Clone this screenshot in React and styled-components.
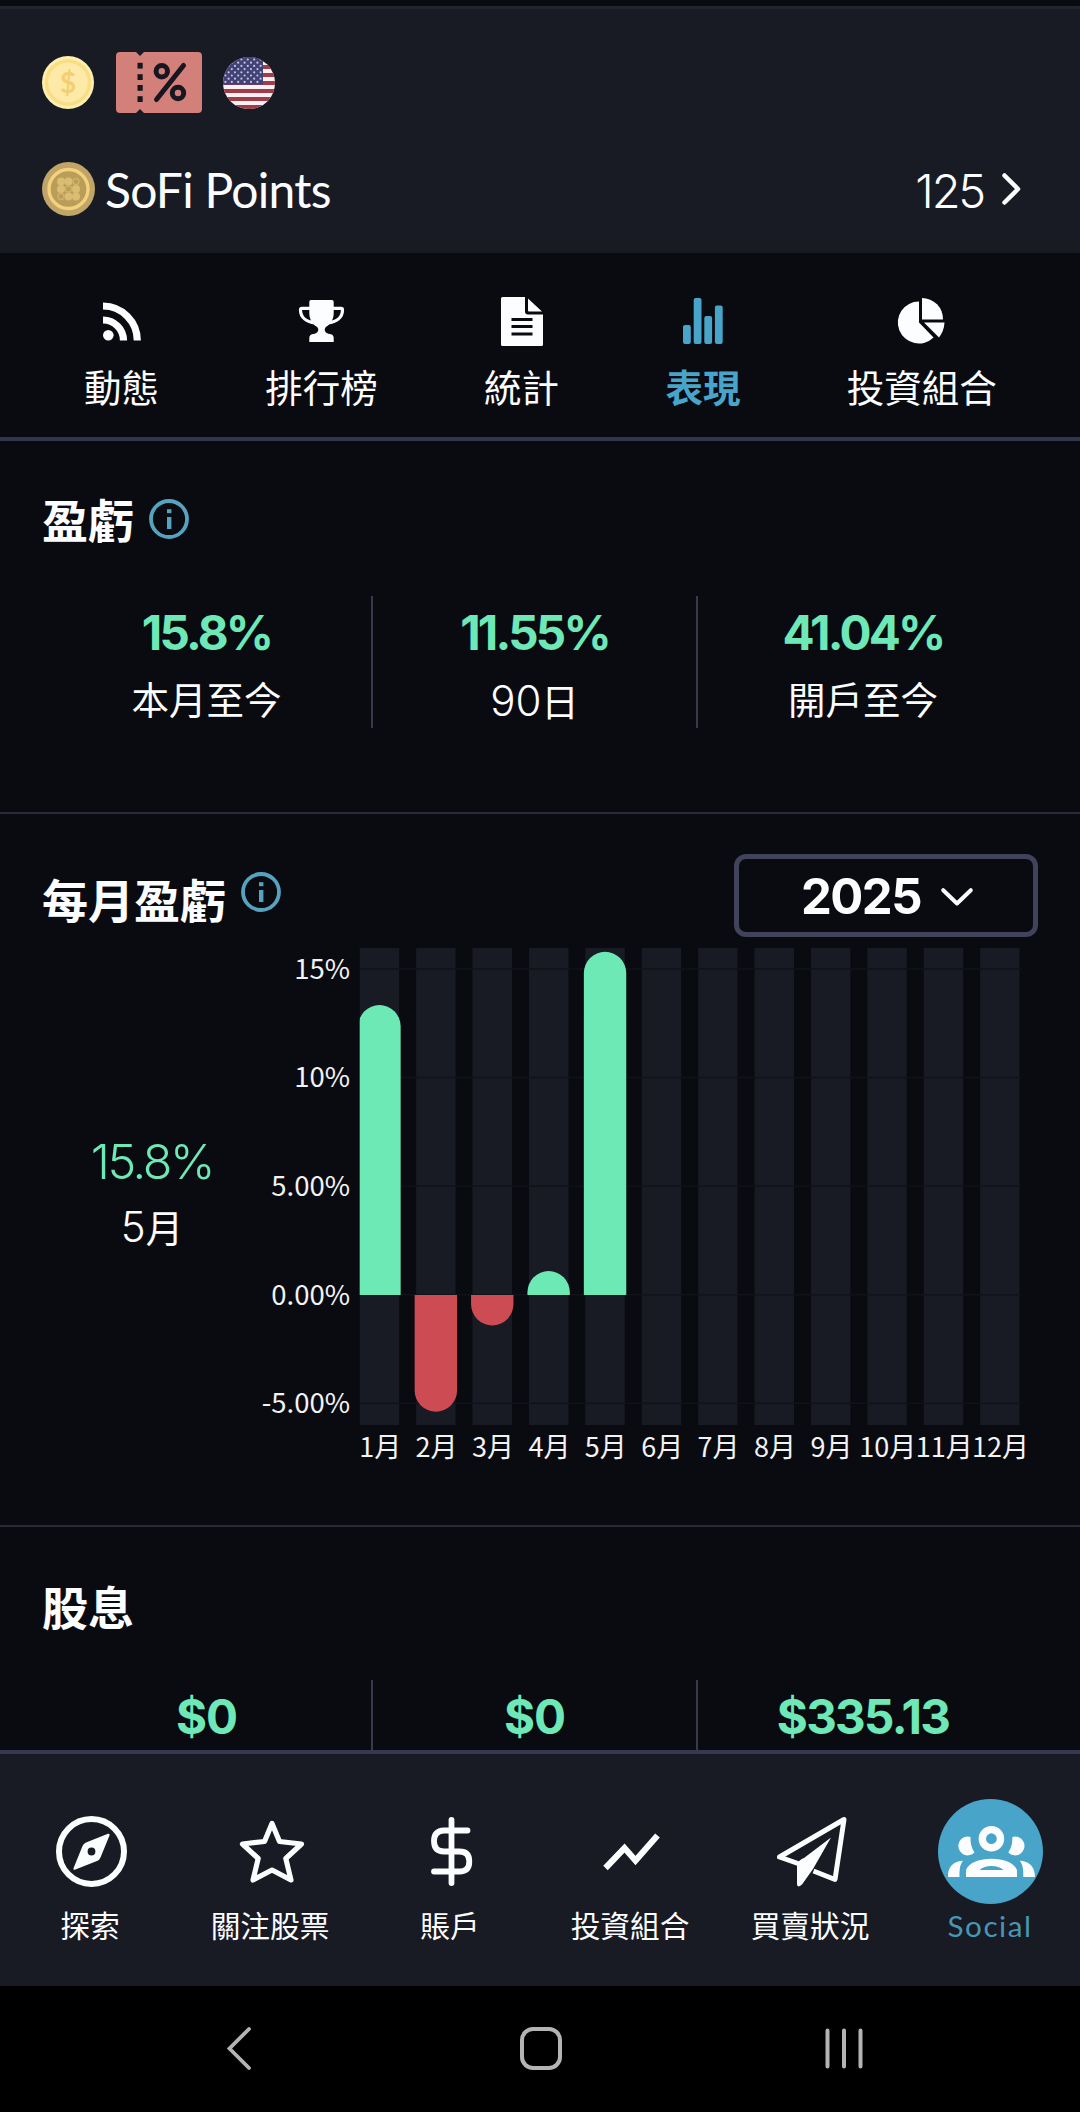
import React, { useState } from "react";
import styled, { createGlobalStyle } from "styled-components";

const GlobalStyle = createGlobalStyle`
  * {
    box-sizing: border-box;
  }
  body {
    margin: 0;
    background: #0a0b11;
    color: #fcfdff;
    font-family: Inter, "Noto Sans CJK TC", sans-serif;
  }
  svg {
    display: block;
    flex: none;
    overflow: visible;
  }
`;

const Screen = styled.div`
  display: flex;
  flex-direction: column;
  width: 1080px;
  height: 2112px;
  overflow: hidden;
`;

const Header = styled.header`
  flex: none;
  height: 247px;
  margin-top: 6px;
  padding: 43px 59px 0 42px;
  border-top: 3px solid #23242e;
  background: #181a24;
`;

const Badges = styled.div`
  display: flex;
  align-items: center;
  height: 61px;
`;

const TicketWrap = styled.div`
  margin: 0 21px 0 22px;
`;

const PointsRow = styled.div`
  display: flex;
  align-items: center;
  height: 54px;
  margin-top: 49px;
`;

const PointsName = styled.span`
  flex: 1;
  margin: 2px 0 0 10px;
  font: 400 48px/56px Lato, sans-serif;
  letter-spacing: -0.75px;
`;

const PointsValue = styled.span`
  margin: 4px 18px 0 0;
  font-size: 47px;
  font-weight: 350;
  line-height: 54px;
  letter-spacing: -2.2px;
`;

const Tabs = styled.nav`
  display: flex;
  flex: none;
  gap: 106.3px;
  height: 188px;
  padding: 42px 0 0 84px;
  border-bottom: 4px solid #33364a;
`;

const Tab = styled.div`
  display: flex;
  flex-direction: column;
  align-items: center;
  color: ${({ $active }) => ($active ? "#48a4c9" : "#fcfdff")};
  cursor: pointer;
`;

const TabIcon = styled.div`
  display: flex;
  align-items: center;
  justify-content: center;
  height: 52px;
  margin-bottom: 19px;
`;

const TabLabel = styled.span`
  font-size: 37.5px;
  font-weight: ${({ $active }) => ($active ? 700 : 400)};
  line-height: 45px;
  white-space: nowrap;
`;

const Section = styled.section`
  flex: none;
  height: ${({ $height }) => $height}px;
  padding-top: ${({ $top }) => $top}px;
  border-bottom: ${({ $last }) => ($last ? "0" : "2px solid #2a2b37")};
  overflow: hidden;
`;

const TitleRow = styled.div`
  display: flex;
  align-items: center;
  height: 56px;
  padding-left: 42px;
`;

const Title = styled.h2`
  margin: 3px 15px 0 0;
  font-size: 46px;
  font-weight: 700;
  line-height: 56px;
`;

const Stats = styled.div`
  display: grid;
  grid-template-columns: 331px 325px 330px;
  height: 132px;
  margin-top: ${({ $gap }) => $gap}px;
  padding-left: 42px;
`;

const Stat = styled.div`
  display: flex;
  flex-direction: column;
  align-items: center;
  gap: 22px;
  padding-top: 13px;
  border-right: 2px solid #38394c;

  &:last-child {
    border-right: 0;
  }
`;

const StatValue = styled.span`
  color: #6ee8b7;
  font-size: 47.5px;
  font-weight: 700;
  line-height: 48px;
  letter-spacing: ${({ $spacing }) => $spacing}px;
`;

const StatLabel = styled.span`
  font-size: 37.5px;
  line-height: 44px;
`;

const LightDigits = styled.span`
  font-size: 42px;
  font-weight: 300;
`;

const MonthlyHeader = styled.div`
  display: flex;
  align-items: center;
  height: 83px;
  padding: 0 42px;
`;

const MonthlyTitle = styled(Title)`
  margin-top: 10px;
`;

const InfoRaised = styled.div`
  flex: 1;
  margin-bottom: 8px;
`;

const YearSelect = styled.button`
  display: flex;
  align-items: center;
  justify-content: center;
  gap: 20px;
  width: 304px;
  height: 83px;
  padding: 2px 0 0 2px;
  border: 5px solid #41435b;
  border-radius: 12px;
  background: transparent;
  color: #fcfdff;
  font: 700 49px/60px Inter, sans-serif;
  letter-spacing: -1.5px;
`;

const ChartRow = styled.div`
  display: flex;
  padding-left: 42px;
`;

const MonthSummary = styled.div`
  display: flex;
  flex-direction: column;
  align-items: center;
  gap: 17px;
  width: 220px;
  padding-top: 199px;
`;

const MonthValue = styled.span`
  color: #6ee8b7;
  font-size: 48.5px;
  font-weight: 300;
  line-height: 52px;
  letter-spacing: -2.4px;
`;

const BottomNav = styled.nav`
  display: grid;
  flex: none;
  grid-template-columns: repeat(6, 180px);
  height: 236px;
  padding-top: 45px;
  border-top: 4px solid #37384f;
  background: #181a24;
`;

const NavItem = styled.div`
  display: flex;
  flex-direction: column;
  align-items: center;
  gap: 4px;
`;

const NavIcon = styled.div`
  display: flex;
  align-items: center;
  justify-content: center;
  width: 105px;
  height: 105px;
  margin-left: ${({ $active }) => ($active ? 0 : "3px")};
  border-radius: 50%;
  background: ${({ $active }) => ($active ? "#48a4c9" : "transparent")};
`;

const NavLabel = styled.span`
  color: ${({ $active }) => ($active ? "#4896b3" : "#fcfdff")};
  font-family: ${({ $active }) => ($active ? "Lato, " : "")}Inter,
    "Noto Sans CJK TC", sans-serif;
  font-size: 29.7px;
  line-height: 36px;
  letter-spacing: ${({ $active }) => ($active ? "1.5px" : "0")};
`;

const SystemBar = styled.div`
  display: flex;
  flex: none;
  align-items: flex-start;
  height: 126px;
  padding: 41px 0 0 227px;
  background: #000;
`;

const HomeKey = styled.div`
  width: 42px;
  height: 43px;
  margin: 0 263px 0 269px;
  border: 4px solid #b4b4b4;
  border-radius: 13px;
`;

const CoinIcon = () => (
  <svg width="52" height="53" viewBox="0 0 52 53">
    <ellipse cx="26" cy="26.5" rx="26" ry="26.5" fill="#fdeeb1" />
    <circle cx="26" cy="26.5" r="21.5" fill="#fdeaa8" stroke="#f9de83" strokeWidth="3.5" />
    <text
      x="26"
      y="36.5"
      fill="#f3cf73"
      fontFamily="Lato, sans-serif"
      fontSize="28"
      fontWeight="700"
      textAnchor="middle"
    >
      $
    </text>
  </svg>
);

const TicketIcon = () => (
  <svg width="86" height="61" viewBox="0 0 86 61">
    <path
      fill="#d37f7a"
      d="M4 0H20L24 4L28 0H82Q86 0 86 4V57Q86 61 82 61H28L24 57L20 61H4Q0 61 0 57V4Q0 0 4 0Z"
    />
    <g fill="#181620">
      {[10.8, 22.2, 33, 44.2].map((y) => (
        <rect key={y} x="21.5" y={y} width="5.2" height="5.8" />
      ))}
    </g>
    <g fill="none" stroke="#181620" strokeWidth="5">
      <circle cx="45.8" cy="19.3" r="5.7" />
      <circle cx="62" cy="41" r="5.7" />
      <path d="M67.5 13.5L40.5 47.5" strokeLinecap="round" />
    </g>
  </svg>
);

const FlagIcon = () => (
  <svg width="52" height="52" viewBox="0 0 52 52">
    <clipPath id="flag">
      <circle cx="26" cy="26" r="26" />
    </clipPath>
    <g clipPath="url(#flag)">
      <rect width="52" height="52" fill="#f7f1f3" />
      {[0, 2, 4, 6, 8, 10, 12].map((i) => (
        <rect key={i} y={i * 4} width="52" height="4" fill="#a23b48" />
      ))}
      <rect width="40" height="27.6" fill="#414377" />
      {[2.5, 5.7, 8.9, 12.1, 15.3, 18.5, 21.7, 24.9].map((y, row) =>
        [0, 1, 2, 3, 4, 5].map((col) => (
          <circle
            key={`${row}-${col}`}
            cx={(row % 2 ? 2.4 : 5.6) + col * 6.4}
            cy={y}
            r="1.1"
            fill="#c3c3df"
          />
        ))
      )}
    </g>
  </svg>
);

const SofiCoinIcon = () => (
  <svg width="53" height="54" viewBox="0 0 53 54">
    <ellipse cx="26.5" cy="27" rx="26.5" ry="27" fill="#c0a468" />
    <circle cx="26.5" cy="27" r="19.5" fill="#b99d58" stroke="#f3d17e" strokeWidth="3.4" />
    <g fill="#dabd72">
      <circle cx="19" cy="19.5" r="4" />
      <circle cx="26.5" cy="19.5" r="4" />
      <circle cx="19" cy="27" r="4" />
      <circle cx="34" cy="27" r="4" />
      <circle cx="26.5" cy="34.5" r="4" />
      <circle cx="34" cy="34.5" r="4" />
    </g>
    <g fill="none" stroke="#cfb26a" strokeWidth="1.3">
      <circle cx="34" cy="19.5" r="3" />
      <circle cx="26.5" cy="27" r="3" />
      <circle cx="19" cy="34.5" r="3" />
    </g>
  </svg>
);

const InfoIcon = () => (
  <svg width="40" height="40" viewBox="0 0 40 40">
    <circle cx="20" cy="20" r="18" fill="none" stroke="#56a3c0" strokeWidth="3.8" />
    <rect x="18" y="10.2" width="4.4" height="4" fill="#56a3c0" />
    <rect x="18" y="18" width="4.4" height="12" fill="#56a3c0" />
  </svg>
);

const FeedIcon = () => (
  <svg width="38" height="39" viewBox="0 0 38 39">
    <circle cx="5.3" cy="33.2" r="5.3" fill="currentColor" />
    <path
      d="M0 18A20.5 20.5 0 0 1 20.5 38.5M0 4A34.5 34.5 0 0 1 34.3 38.5"
      fill="none"
      stroke="currentColor"
      strokeWidth="7.2"
    />
  </svg>
);

const TrophyIcon = () => (
  <svg width="45" height="42" viewBox="0 0 45 42">
    <path
      fill="currentColor"
      d="M12 0H33Q34.7 0 34.7 2V13C34.7 20 31 24.5 27.5 26.5Q25 28.5 26 31Q27 33.5 31 34Q34.7 34.5 34.7 38V42H10.3V38Q10.3 34.5 14 34Q18 33.5 19 31Q20 28.5 17.5 26.5C14 24.5 10.3 20 10.3 13V2Q10.3 0 12 0Z"
    />
    <path
      d="M11 8.3H3Q1.5 8.3 1.5 10C1.5 18 8 22 16 23M34 8.3H42Q43.5 8.3 43.5 10C43.5 18 37 22 29 23"
      fill="none"
      stroke="currentColor"
      strokeWidth="3.2"
    />
  </svg>
);

const DocumentIcon = () => (
  <svg width="42" height="49" viewBox="0 0 42 49">
    <path
      fill="currentColor"
      d="M1.5 0H24V14.5Q24 17.5 27 17.5H42V47.5Q42 49 40.5 49H1.5Q0 49 0 47.5V1.5Q0 0 1.5 0ZM27 1.5L41 14.5H28Q27 14.5 27 13.5Z"
    />
    <path d="M10.5 22.5H31.5M10.5 29.5H31.5M10.5 37H31.5" stroke="#0a0b11" strokeWidth="3" />
  </svg>
);

const BarsIcon = () => (
  <svg width="40" height="46" viewBox="0 0 40 46">
    <g fill="currentColor">
      <rect x="0" y="27" width="7.8" height="19" rx="2" />
      <rect x="10.7" y="0" width="7.8" height="46" rx="2" />
      <rect x="21.3" y="18" width="7.8" height="28" rx="2" />
      <rect x="31.9" y="7.5" width="7.8" height="38.5" rx="2" />
    </g>
  </svg>
);

const PieIcon = () => (
  <svg width="47" height="46" viewBox="0 0 47 46">
    <g fill="currentColor">
      <path d="M21 3.5V24.5L35.5 39.5A21 21 0 1 1 21 3.5Z" />
      <path d="M24 0A21 21 0 0 1 45 21.5H24Z" />
      <path d="M26 24.5H46.5Q46 33 41 39.5Z" />
    </g>
  </svg>
);

const CompassIcon = () => (
  <svg width="71" height="71" viewBox="0 0 71 71">
    <circle cx="35.5" cy="35.5" r="32.5" fill="none" stroke="currentColor" strokeWidth="6" />
    <path
      fill="currentColor"
      fillRule="evenodd"
      d="M52 17.8Q54.2 17.3 53.5 19.5L44.5 41.5Q43.5 44 41 45L18.8 53.8Q17 54.2 17.5 52.3L26.5 30Q27.5 27.5 30 26.5ZM35.5 31.6A3.9 3.9 0 1 0 35.5 39.4A3.9 3.9 0 1 0 35.5 31.6Z"
    />
  </svg>
);

const StarIcon = () => (
  <svg width="64" height="61" viewBox="0 0 64 61">
    <path
      d="M32 2.5L39.5 20.5L61.5 23L45.8 37.5L51 59L32 49L13 59L18.2 37.5L2.5 23L24.5 20.5Z"
      fill="none"
      stroke="currentColor"
      strokeWidth="5.2"
      strokeLinejoin="round"
    />
  </svg>
);

const DollarIcon = () => (
  <svg width="41" height="69" viewBox="0 0 41 69">
    <path
      d="M20.5 3V66M36.5 13.5H13Q3 14 3 24Q3 34.5 13 34.5H28.5Q38.3 34.5 38.3 44.5Q38.3 54.5 28.5 54.5H3"
      fill="none"
      stroke="currentColor"
      strokeWidth="5.8"
      strokeLinecap="round"
    />
  </svg>
);

const TrendIcon = () => (
  <svg width="57" height="38" viewBox="0 0 57 38">
    <path
      d="M2.5 35L21.5 15L32.5 27.5L54.5 2.5"
      fill="none"
      stroke="currentColor"
      strokeWidth="6.2"
    />
  </svg>
);

const PlaneIcon = () => (
  <svg width="70" height="70" viewBox="0 0 70 70">
    <path
      d="M21 46.5L2.5 40L67 2.5L58 62.5L36.5 54"
      fill="none"
      stroke="currentColor"
      strokeWidth="5"
      strokeLinejoin="round"
    />
    <path
      fill="currentColor"
      d="M54 20.5L36 52L25 67.5Q20 71.5 20 67V46.5Q22 43 27 41Z"
    />
  </svg>
);

const PeopleIcon = () => (
  <svg width="105" height="105" viewBox="0 0 105 105">
    <circle cx="53.4" cy="39.7" r="9.1" fill="none" stroke="#fcfdff" strokeWidth="7.4" />
    <g fill="#fcfdff">
      <path d="M32.5 38Q32 47 36.5 53.5A9.4 9.4 0 1 1 32.5 38Z" />
      <path d="M74.3 38Q74.8 47 70.3 53.5A9.4 9.4 0 1 0 74.3 38Z" />
      <path
        fillRule="evenodd"
        d="M28 78V71C31 63 42 59.7 53.4 59.7C65 59.7 76 63 79 71V78ZM41.500 71H65.500Q61 67 53.4 67Q46 67 41.500 71Z"
      />
      <path d="M10 78V75C11 66 17 62 25 61.7C21.5 66 21.500 71 21.500 78Z" />
      <path d="M96.8 78V75C95.8 66 89.8 62 81.8 61.7C85.3 66 85.3 71 85.3 78Z" />
    </g>
  </svg>
);

const tabs = [
  { label: "動態", Icon: FeedIcon },
  { label: "排行榜", Icon: TrophyIcon },
  { label: "統計", Icon: DocumentIcon },
  { label: "表現", Icon: BarsIcon },
  { label: "投資組合", Icon: PieIcon },
];

const navItems = [
  { label: "探索", Icon: CompassIcon },
  { label: "關注股票", Icon: StarIcon },
  { label: "賬戶", Icon: DollarIcon },
  { label: "投資組合", Icon: TrendIcon },
  { label: "買賣狀況", Icon: PlaneIcon },
  { label: "Social", Icon: PeopleIcon },
];

const ticks = [
  { value: 15, label: "15%" },
  { value: 10, label: "10%" },
  { value: 5, label: "5.00%" },
  { value: 0, label: "0.00%" },
  { value: -5, label: "-5.00%" },
];

const monthly = [13.35, -5.37, -1.4, 1.1, 15.8, 0, 0, 0, 0, 0, 0, 0];

const ZERO_Y = 358;
const UNIT = 21.72;
const FIRST_X = 97.7;
const STEP = 56.4;
const BAR_WIDTH = 42.4;

const barPath = (value, index) => {
  // the first bar is cut by the left edge of the plot
  const center = FIRST_X + 19.75 + index * STEP;
  const left = center - BAR_WIDTH / 2;
  const right = center + BAR_WIDTH / 2;
  const end = ZERO_Y - value * UNIT;
  const r = BAR_WIDTH / 2;
  const shoulder = value > 0 ? end + r : end - r;
  return `M${left} ${ZERO_Y}V${shoulder}A${r} ${r} 0 0 ${
    value > 0 ? 1 : 0
  } ${right} ${shoulder}V${ZERO_Y}Z`;
};

const MonthlyChart = () => (
  <svg width="776" height="540" viewBox="0 0 776 540">
    <clipPath id="plot">
      <rect x={FIRST_X} y="11" width="670" height="477" />
    </clipPath>
    {monthly.map((_, i) => (
      <rect key={i} x={FIRST_X + i * STEP} y="11" width="39.5" height="477" fill="#181a24" />
    ))}
    {ticks.map(({ value }) => (
      <rect
        key={value}
        x={FIRST_X}
        y={ZERO_Y - value * UNIT - 1}
        width="662"
        height="1.5"
        fill="#11121a"
      />
    ))}
    <g clipPath="url(#plot)">
      {monthly.map(
        (value, i) =>
          value !== 0 && (
            <path key={i} d={barPath(value, i)} fill={value > 0 ? "#6de9b6" : "#cd4b53"} />
          )
      )}
    </g>
    <g fill="#f2f3f5" fontFamily='"Noto Sans CJK TC", sans-serif' fontSize="27.5">
      {ticks.map(({ value, label }) => (
        <text key={label} x="88" y={ZERO_Y - value * UNIT + 9.5} textAnchor="end">
          {label}
        </text>
      ))}
      {monthly.map((_, i) => (
        <text key={i} x={FIRST_X + 20.5 + i * STEP} y="520" fontSize="27" textAnchor="middle">
          {`${i + 1}月`}
        </text>
      ))}
    </g>
  </svg>
);

const App = () => {
  const [activeTab, setActiveTab] = useState("表現");

  return (
    <>
      <GlobalStyle />
      <Screen>
        <Header>
          <Badges>
            <CoinIcon />
            <TicketWrap>
              <TicketIcon />
            </TicketWrap>
            <FlagIcon />
          </Badges>
          <PointsRow>
            <SofiCoinIcon />
            <PointsName>SoFi Points</PointsName>
            <PointsValue>125</PointsValue>
            <svg width="19" height="32" viewBox="0 0 19 32">
              <path
                d="M2.5 2.5L16 16L2.5 29.5"
                fill="none"
                stroke="#fcfdff"
                strokeWidth="4.5"
                strokeLinecap="round"
                strokeLinejoin="round"
              />
            </svg>
          </PointsRow>
        </Header>

        <Tabs>
          {tabs.map(({ label, Icon }) => (
            <Tab key={label} $active={label === activeTab} onClick={() => setActiveTab(label)}>
              <TabIcon>
                <Icon />
              </TabIcon>
              <TabLabel $active={label === activeTab}>{label}</TabLabel>
            </Tab>
          ))}
        </Tabs>

        <Section $height={373} $top={50}>
          <TitleRow>
            <Title>盈虧</Title>
            <InfoIcon />
          </TitleRow>
          <Stats $gap={49}>
            <Stat>
              <StatValue $spacing={-2.8}>15.8%</StatValue>
              <StatLabel>本月至今</StatLabel>
            </Stat>
            <Stat>
              <StatValue $spacing={-2.8}>11.55%</StatValue>
              <StatLabel>
                <LightDigits>90</LightDigits>日
              </StatLabel>
            </Stat>
            <Stat>
              <StatValue $spacing={-2.8}>41.04%</StatValue>
              <StatLabel>開戶至今</StatLabel>
            </Stat>
          </Stats>
        </Section>

        <Section $height={713} $top={40}>
          <MonthlyHeader>
            <MonthlyTitle>每月盈虧</MonthlyTitle>
            <InfoRaised>
              <InfoIcon />
            </InfoRaised>
            <YearSelect type="button">
              2025
              <svg width="32" height="18" viewBox="0 0 32 18">
                <path
                  d="M2.2 2.2L16 15.5L29.8 2.2"
                  fill="none"
                  stroke="#fcfdff"
                  strokeWidth="4"
                  strokeLinecap="round"
                  strokeLinejoin="round"
                />
              </svg>
            </YearSelect>
          </MonthlyHeader>
          <ChartRow>
            <MonthSummary>
              <MonthValue>15.8%</MonthValue>
              <StatLabel>
                <LightDigits>5</LightDigits>月
              </StatLabel>
            </MonthSummary>
            <MonthlyChart />
          </ChartRow>
        </Section>

        <Section $height={223} $top={51} $last>
          <TitleRow>
            <Title>股息</Title>
          </TitleRow>
          <Stats $gap={46}>
            <Stat>
              <StatValue $spacing={-1}>$0</StatValue>
            </Stat>
            <Stat>
              <StatValue $spacing={-1}>$0</StatValue>
            </Stat>
            <Stat>
              <StatValue $spacing={-1.7}>$335.13</StatValue>
            </Stat>
          </Stats>
        </Section>

        <BottomNav>
          {navItems.map(({ label, Icon }) => (
            <NavItem key={label}>
              <NavIcon $active={label === "Social"}>
                <Icon />
              </NavIcon>
              <NavLabel $active={label === "Social"}>{label}</NavLabel>
            </NavItem>
          ))}
        </BottomNav>

        <SystemBar>
          <svg width="24" height="43" viewBox="0 0 24 43">
            <path
              d="M22 2L2.5 21.5L22 41"
              fill="none"
              stroke="#b4b4b4"
              strokeWidth="3.8"
              strokeLinecap="round"
            />
          </svg>
          <HomeKey />
          <svg width="38" height="43" viewBox="0 0 38 43">
            <path
              d="M2.5 3.5V39.5M19 3.5V39.5M35.5 3.5V39.5"
              stroke="#b4b4b4"
              strokeWidth="4"
              strokeLinecap="round"
            />
          </svg>
        </SystemBar>
      </Screen>
    </>
  );
};

export default App;
